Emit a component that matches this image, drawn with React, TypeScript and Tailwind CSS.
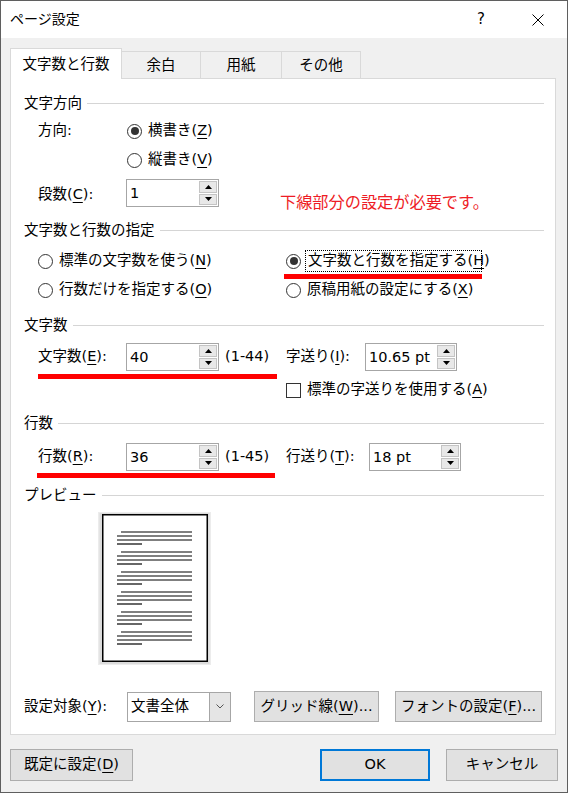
import React from "react";

const U = ({ children }: { children: React.ReactNode }) => (
  <span className="underline underline-offset-[3px] decoration-1">{children}</span>
);

function Radio({ checked }: { checked?: boolean }) {
  return (
    <span className="w-[15px] h-[15px] rounded-full border border-[#333333] bg-white flex items-center justify-center shrink-0">
      {checked && <span className="w-[8px] h-[8px] rounded-full bg-[#333333]" />}
    </span>
  );
}

function Arrow({ up }: { up?: boolean }) {
  return (
    <svg width="7" height="4" viewBox="0 0 7 4">
      <path d={up ? "M0 4 L3.5 0 L7 4 Z" : "M0 0 L3.5 4 L7 0 Z"} fill="#000" />
    </svg>
  );
}

function Spin({ value, className }: { value: string; className: string }) {
  return (
    <div className={`flex h-[28px] border border-[#a6a6a6] bg-white shrink-0 ${className}`}>
      <div className="flex-1 flex items-center pl-[3px] leading-[20px] whitespace-nowrap">{value}</div>
      <div className="flex flex-col w-[19px] py-px pr-px gap-px">
        <div className="flex-1 flex items-center justify-center bg-[#e8e8e8] border border-[#c4c4c4]">
          <Arrow up />
        </div>
        <div className="flex-1 flex items-center justify-center bg-[#e8e8e8] border border-[#c4c4c4]">
          <Arrow />
        </div>
      </div>
    </div>
  );
}

function Section({ title, className }: { title: string; className: string }) {
  return (
    <div className={`flex items-center h-[20px] ${className}`}>
      <span className="leading-[20px] whitespace-nowrap">{title}</span>
      <div className="flex-1 h-px bg-[#d5d5d5] ml-[5px]" />
    </div>
  );
}

function Btn({ children, className }: { children: React.ReactNode; className: string }) {
  return (
    <div className={`flex items-center justify-center bg-[#e1e1e1] whitespace-nowrap ${className}`}>
      {children}
    </div>
  );
}

function Preview() {
  const groups = [20, 40, 60, 80, 100, 120];
  return (
    <svg width="113" height="153" viewBox="0 0 113 153">
      <rect x="0" y="0" width="113" height="153" fill="#ececec" />
      <rect x="1.5" y="1" width="110" height="151" fill="#dcdcdc" />
      <rect x="4.75" y="2.75" width="104.5" height="146.5" fill="#ffffff" stroke="#000" strokeWidth="1.5" />
      {groups.map((g) => (
        <g key={g} stroke="#000" strokeWidth="1.2">
          <line x1="23" y1={g} x2="94" y2={g} />
          <line x1="19" y1={g + 4} x2="94" y2={g + 4} />
          <line x1="19" y1={g + 8} x2="94" y2={g + 8} />
          <line x1="19" y1={g + 12} x2="44" y2={g + 12} />
        </g>
      ))}
    </svg>
  );
}

export default function App() {
  return (
    <div className="w-[568px] h-[793px] border border-[#5f5f5f] bg-[#f0f0f0] flex flex-col text-black text-[14.5px] font-['DejaVu_Sans','Noto_Sans_CJK_JP',sans-serif] overflow-hidden">
      {/* Title bar */}
      <div className="h-[37px] bg-white flex items-center pl-[9px] pr-[23px] shrink-0">
        <span className="text-[14px]">ページ設定</span>
        <span className="ml-auto text-[15px] leading-none">?</span>
        <svg className="ml-[47px]" width="12" height="12" viewBox="0 0 12 12">
          <path d="M0.5 0.5 L11.5 11.5 M11.5 0.5 L0.5 11.5" stroke="#000" strokeWidth="1" />
        </svg>
      </div>

      {/* Tabs */}
      <div className="mt-[10px] ml-[9px] h-[31px] -mb-px flex shrink-0">
        <div className="relative z-10 w-[112px] h-[31px] bg-white border border-b-0 border-[#d9d9d9] flex items-center justify-center pt-[2px]">
          文字数と行数
        </div>
        <div className="mt-[3px] w-[79px] h-[27px] border border-l-0 border-b-0 border-[#d9d9d9] flex items-center justify-center pt-[2px]">
          余白
        </div>
        <div className="mt-[3px] w-[81px] h-[27px] border border-l-0 border-b-0 border-[#d9d9d9] flex items-center justify-center pt-[2px]">
          用紙
        </div>
        <div className="mt-[3px] w-[79px] h-[27px] border border-l-0 border-b-0 border-[#d9d9d9] flex items-center justify-center pt-[2px]">
          その他
        </div>
      </div>

      {/* Panel */}
      <div className="ml-[9px] w-[546px] h-[657px] bg-white border border-[#d9d9d9] flex flex-col pl-[13px] pr-[11px] shrink-0">
        <Section title="文字方向" className="mt-[14px]" />

        <div className="mt-[8px] ml-[14px] flex items-center h-[20px]">
          <span className="w-[89px]">方向:</span>
          <Radio checked />
          <span className="ml-[6px]">
            横書き(<U>Z</U>)
          </span>
        </div>
        <div className="mt-[9px] ml-[103px] flex items-center h-[20px]">
          <Radio />
          <span className="ml-[6px]">
            縦書き(<U>V</U>)
          </span>
        </div>

        <div className="mt-[9px] ml-[14px] flex items-start h-[28px]">
          <span className="w-[88px] h-[28px] flex items-center pt-[3px]">
            段数(<U>C</U>):
          </span>
          <Spin value="1" className="w-[93px]" />
          <span className="ml-[61px] mt-[14px] leading-[20px] text-[16.2px] text-[#ee1c25] whitespace-nowrap">
            下線部分の設定が必要です。
          </span>
        </div>

        <Section title="文字数と行数の指定" className="mt-[13px]" />

        <div className="mt-[10px] ml-[14px] flex">
          <div className="w-[248px] flex flex-col">
            <div className="h-[22px] flex items-center">
              <Radio />
              <span className="ml-[6px] whitespace-nowrap">
                標準の文字数を使う(<U>N</U>)
              </span>
            </div>
            <div className="mt-[8px] h-[20px] flex items-center">
              <Radio />
              <span className="ml-[6px] whitespace-nowrap">
                行数だけを指定する(<U>O</U>)
              </span>
            </div>
          </div>
          <div className="flex flex-col">
            <div className="h-[22px] flex items-center">
              <Radio checked />
              <span className="ml-[4px] h-[22px] w-[177px] border border-dotted border-black pl-[2px] flex items-center whitespace-nowrap">
                文字数と行数を指定する(<U>H</U>)
              </span>
            </div>
            <div className="mt-[2px] -ml-[2px] h-[5px] w-[198px] bg-[#ff0000]" />
            <div className="mt-px h-[20px] flex items-center">
              <Radio />
              <span className="ml-[6px] whitespace-nowrap">
                原稿用紙の設定にする(<U>X</U>)
              </span>
            </div>
          </div>
        </div>

        <Section title="文字数" className="mt-[15px]" />

        <div className="mt-[8px] ml-[14px] flex">
          <div className="w-[248px] flex flex-col">
            <div className="h-[28px] flex items-center">
              <span className="w-[88px] whitespace-nowrap">
                文字数(<U>E</U>):
              </span>
              <Spin value="40" className="w-[93px]" />
              <span className="ml-[6px] whitespace-nowrap">(1-44)</span>
            </div>
            <div className="mt-[3px] h-[5px] w-[239px] bg-[#ff0000]" />
          </div>
          <div className="flex flex-col">
            <div className="h-[28px] flex items-center">
              <span className="w-[79px] whitespace-nowrap">
                字送り(<U>I</U>):
              </span>
              <Spin value="10.65 pt" className="w-[92px]" />
            </div>
            <div className="mt-[10px] h-[18px] flex items-center">
              <span className="w-[15px] h-[15px] border border-[#333333] bg-white shrink-0" />
              <span className="ml-[6px] whitespace-nowrap">
                標準の字送りを使用する(<U>A</U>)
              </span>
            </div>
          </div>
        </div>

        <Section title="行数" className="mt-[14px]" />

        <div className="mt-[10px] ml-[14px] flex">
          <div className="w-[248px] flex flex-col">
            <div className="h-[28px] flex items-center">
              <span className="w-[88px] whitespace-nowrap">
                行数(<U>R</U>):
              </span>
              <Spin value="36" className="w-[93px]" />
              <span className="ml-[6px] whitespace-nowrap">(1-45)</span>
            </div>
            <div className="mt-[2px] -ml-px h-[5px] w-[238px] bg-[#ff0000]" />
          </div>
          <div className="flex flex-col">
            <div className="h-[28px] flex items-center">
              <span className="w-[83px] whitespace-nowrap">
                行送り(<U>T</U>):
              </span>
              <Spin value="18 pt" className="w-[92px]" />
            </div>
          </div>
        </div>

        <Section title="プレビュー" className="mt-[7px]" />

        <div className="mt-[7px] ml-[74px]">
          <Preview />
        </div>

        <div className="mt-[26px] flex items-center h-[31px]">
          <span className="w-[103px] whitespace-nowrap">
            設定対象(<U>Y</U>):
          </span>
          <div className="w-[104px] h-[30px] border border-[#a6a6a6] bg-white flex">
            <div className="flex-1 flex items-center pl-[3px] whitespace-nowrap">文書全体</div>
            <div className="w-[21px] bg-[#e5e5e5] border-l border-[#a6a6a6] flex items-center justify-center">
              <svg width="8" height="5" viewBox="0 0 8 5">
                <path d="M0.5 0.5 L4 4 L7.5 0.5" stroke="#555" strokeWidth="1" fill="none" />
              </svg>
            </div>
          </div>
          <Btn className="ml-[23px] w-[125px] h-[31px] border border-[#adadad]">
            グリッド線(<U>W</U>)...
          </Btn>
          <Btn className="ml-[16px] w-[147px] h-[31px] border border-[#adadad]">
            フォントの設定(<U>F</U>)...
          </Btn>
        </div>
      </div>

      {/* Bottom buttons */}
      <div className="mt-[14px] flex px-[9px] shrink-0">
        <Btn className="w-[123px] h-[32px] border border-[#adadad]">
          既定に設定(<U>D</U>)
        </Btn>
        <Btn className="ml-auto w-[110px] h-[32px] border-2 border-[#0078d7]">OK</Btn>
        <Btn className="ml-[16px] w-[112px] h-[32px] border border-[#adadad]">キャンセル</Btn>
      </div>
    </div>
  );
}
